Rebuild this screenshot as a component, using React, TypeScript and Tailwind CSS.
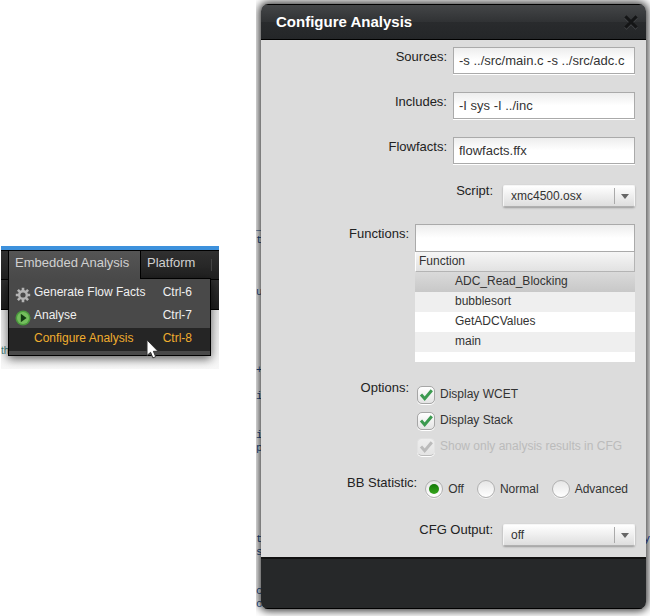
import React, { useState } from "react";

const functions = ["ADC_Read_Blocking", "bubblesort", "GetADCValues", "main"];

const codeLines: Record<number, string> = {
  17: "_",
  18: "t",
  22: "u",
  28: "+",
  30: "i",
  33: "i",
  34: "p",
  41: "t",
  42: "s",
  45: "c",
  46: "o",
};

function GearIcon() {
  return (
    <svg viewBox="0 0 16 16" className="h-4 w-4 shrink-0" aria-hidden="true">
      <g stroke="#b4b4b4" strokeWidth="2.6">
        <path d="M8 .8v14.4M.8 8h14.4M2.9 2.9l10.2 10.2M13.1 2.9L2.9 13.1" />
      </g>
      <circle cx="8" cy="8" r="5" fill="#b4b4b4" />
      <circle cx="8" cy="8" r="2.6" fill="#4a4a4a" />
    </svg>
  );
}

function PlayIcon() {
  return (
    <svg viewBox="0 0 16 16" className="h-4 w-4 shrink-0" aria-hidden="true">
      <circle cx="8" cy="8" r="7.5" fill="#4b9a3d" />
      <circle cx="8" cy="8" r="6" fill="#74be5d" />
      <path d="M5.8 3.8v8.4L11.6 8z" fill="#123a12" />
    </svg>
  );
}

function MenuItem({ icon, label, keys, active }: { icon?: React.ReactNode; label: string; keys: string; active?: boolean }) {
  return (
    <button
      type="button"
      role="menuitem"
      className={
        active
          ? "flex h-[23px] w-full items-center bg-[#252525] pr-[18px] pb-1 pl-1.5 text-xs text-[#f0ad2e]"
          : "flex h-[23px] w-full items-center pr-[18px] pb-1 pl-1.5 text-xs text-[#f0f0f0]"
      }
    >
      <span className="flex h-[22px] w-[19px] items-end">{icon}</span>
      <span className="flex-1 text-left whitespace-nowrap">{label}</span>
      <span>{keys}</span>
    </button>
  );
}

function MenuPanel() {
  return (
    <section className="relative mt-[246px] ml-px w-[218px] shrink-0 overflow-hidden">
      <div className="h-1 bg-[#3d91dc]" />
      <nav className="flex h-[29px] items-stretch border-t border-black bg-linear-to-b from-[#303030] to-[#202020] pl-[7px] text-[13px] text-[#d0d0d0]">
        <button type="button" className="relative z-20 w-[133px] border-x border-black bg-linear-to-b from-[#555] to-[#494949] pb-1 pl-1.5 text-left whitespace-nowrap">
          Embedded Analysis
        </button>
        <button type="button" className="px-1.5 pb-1">
          Platform
        </button>
        <span className="my-2 ml-2.5 w-px bg-[#444]" />
      </nav>
      <div className="h-[31px] border-y border-black bg-linear-to-b from-[#303030] to-[#1e1e1e]" />
      <div className="h-[59px] bg-linear-to-b from-[#e6e6e6] to-[#f8f8f8] pt-[34px] text-[10px] leading-[14px] text-[#3f8077]">
        th
      </div>
      <div role="menu" className="absolute top-8 left-[7px] z-10 w-[203px] border border-black bg-[#494949] pt-[3px] pb-1 shadow-[0_3px_9px_rgba(0,0,0,0.6)]">
        <MenuItem icon={<GearIcon />} label="Generate Flow Facts" keys="Ctrl-6" />
        <MenuItem icon={<PlayIcon />} label="Analyse" keys="Ctrl-7" />
        <MenuItem label="Configure Analysis" keys="Ctrl-8" active />
      </div>
      <svg viewBox="0 0 13 20" className="absolute top-[93px] left-[145px] z-30 h-5 w-[13px]" aria-hidden="true">
        <path d="M1 1v15.5l3.6-3.2 2.3 5.6 2.8-1.2-2.3-5.4H12z" fill="#fff" stroke="#333" strokeWidth="1" />
      </svg>
    </section>
  );
}

function TextRow({ id, label, value }: { id: string; label: string; value: string }) {
  return (
    <div className="flex items-start justify-end gap-1.5">
      <label htmlFor={id} className="leading-5">
        {label}
      </label>
      <div className="w-[182px] border-b border-white">
        <input
          id={id}
          defaultValue={value}
          className="block h-[27px] w-full border border-[#aaa] bg-linear-to-b from-[#ededed] to-white to-50% px-[5px] text-[13px] text-[#333] outline-none"
        />
      </div>
    </div>
  );
}

function SelectRow({ id, label, value }: { id: string; label: string; value: string }) {
  return (
    <div className="flex items-start justify-end gap-2.5">
      <label htmlFor={id} className="leading-5">
        {label}
      </label>
      <div className="relative mt-1 w-[132px]">
        <select
          id={id}
          defaultValue={value}
          className="block h-[22px] w-full appearance-none rounded-xs border border-[#f6f6f6] border-b-[#b0b0b0] bg-linear-to-b from-white to-[#dedede] pl-[7px] text-xs text-[#333] shadow-[0_1px_2px_rgba(0,0,0,0.3)] outline-none"
        >
          <option>{value}</option>
        </select>
        <span className="pointer-events-none absolute inset-y-0 right-0 flex w-[21px] items-center">
          <span className="h-4 w-px bg-[#aaa]" />
          <svg viewBox="0 0 8 5" className="ml-1.5 h-[5px] w-2" aria-hidden="true">
            <path d="M0 0h8L4 5z" fill="#666" />
          </svg>
        </span>
      </div>
    </div>
  );
}

function CheckOption({ label, disabled }: { label: string; disabled?: boolean }) {
  return (
    <label className={disabled ? "flex h-[18px] items-center gap-[5px] text-[#bbb]" : "flex h-[18px] items-center gap-[5px]"}>
      <span className="grid h-[18px] w-[18px] shrink-0">
        <input
          type="checkbox"
          defaultChecked
          disabled={disabled}
          className="peer col-start-1 row-start-1 h-[18px] w-[18px] appearance-none rounded-[5px] border border-[#a6a6a6] bg-linear-to-b from-white to-[#e4e4e4] shadow-[0_1px_0_#fff] disabled:border-[#e2e2e2] disabled:border-b-[#bbb] disabled:from-[#eee]"
        />
        <svg viewBox="0 0 18 18" className="pointer-events-none invisible col-start-1 row-start-1 h-[18px] w-[18px] peer-checked:visible" aria-hidden="true">
          <path d="M4 8.6l3.7 4.2L14.8 4.3" fill="none" stroke={disabled ? "#bbb" : "#3c9a50"} strokeWidth="3" />
        </svg>
      </span>
      <span className="pb-0.5">{label}</span>
    </label>
  );
}

function RadioOption({ label, checked }: { label: string; checked?: boolean }) {
  return (
    <label className="flex h-[18px] items-center gap-[5px]">
      <input
        type="radio"
        name="bb-statistic"
        defaultChecked={checked}
        className="grid h-[18px] w-[18px] shrink-0 appearance-none place-items-center rounded-full border border-[#b0b0b0] bg-linear-to-b from-[#e6e6e6] to-white shadow-[0_1px_0_#f4f4f4] before:hidden before:h-2.5 before:w-2.5 before:rounded-full before:bg-linear-to-b before:from-[#137a08] before:to-[#35a51c] checked:before:block"
      />
      {label}
    </label>
  );
}

function Dialog() {
  const [selected, setSelected] = useState(0);
  return (
    <section
      role="dialog"
      aria-labelledby="dialog-title"
      className="relative overflow-hidden rounded-[7px] bg-[#dcdcdc] text-[13px] text-[#222] shadow-[0_0_8px_2px_rgba(0,0,0,0.8)]"
    >
      <header className="flex h-9 items-center justify-between border-y border-black bg-[linear-gradient(#444648,#303234_50%,#292b2d_50%,#242628)] pr-[7px] pl-[15px]">
        <h1 id="dialog-title" className="text-[15px] font-bold text-white">
          Configure Analysis
        </h1>
        <button type="button" aria-label="Close">
          <svg viewBox="0 0 16 16" className="h-4 w-4">
            <path d="M2.4 3.4l11.2 11.2M13.6 3.4L2.4 14.6" stroke="#45474a" strokeWidth="3" />
            <path d="M2.4 2.4l11.2 11.2M13.6 2.4L2.4 13.6" stroke="#141516" strokeWidth="3" />
          </svg>
        </button>
      </header>
      <form className="flex flex-col pt-[7px] pr-[11px] pb-[11px]">
        <div className="flex flex-col gap-[17px]">
          <TextRow id="sources" label="Sources:" value="-s ../src/main.c -s ../src/adc.c" />
          <TextRow id="includes" label="Includes:" value="-I sys -I ../inc" />
          <TextRow id="flowfacts" label="Flowfacts:" value="flowfacts.ffx" />
        </div>
        <div className="mt-4">
          <SelectRow id="script" label="Script:" value="xmc4500.osx" />
        </div>
        <div className="mt-[17px] flex items-start justify-end gap-1.5">
          <label htmlFor="functions" className="leading-5">
            Functions:
          </label>
          <div className="w-[220px] bg-white pb-2.5">
            <input
              id="functions"
              className="block h-7 w-full border border-[#aaa] bg-linear-to-b from-[#ededed] to-white to-50% px-[5px] text-[13px] outline-none"
            />
            <table className="w-full border-separate border-spacing-0 text-left text-xs leading-4 text-[#333]">
              <thead>
                <tr className="h-5">
                  <th className="border-r border-b border-l border-[#b4b4b4] border-l-white bg-linear-to-b from-[#f6f6f6] to-[#e2e2e2] py-0 pr-1 pb-0.5 pl-[3px] font-normal">
                    Function
                  </th>
                </tr>
              </thead>
              <tbody>
                {functions.map((name, i) => (
                  <tr
                    key={name}
                    onClick={() => setSelected(i)}
                    className={
                      i === selected
                        ? "h-5 bg-linear-to-b from-[#dadada] to-[#c8c8c8]"
                        : i % 2
                          ? "h-5 bg-[#efefef]"
                          : "h-5 bg-white"
                    }
                  >
                    <td className="py-0 pb-[3px] pl-10">{name}</td>
                  </tr>
                ))}
              </tbody>
            </table>
          </div>
        </div>
        <fieldset className="mt-4 flex items-start justify-end gap-1.5" aria-labelledby="options-label">
          <span id="options-label" className="leading-5">
            Options:
          </span>
          <div className="flex w-[220px] flex-col gap-2 pt-2 pl-0.5 text-xs text-[#333]">
            <CheckOption label="Display WCET" />
            <CheckOption label="Display Stack" />
            <CheckOption label="Show only analysis results in CFG" disabled />
          </div>
        </fieldset>
        <fieldset className="mt-[17px] flex items-start justify-end gap-2" aria-labelledby="bb-label">
          <span id="bb-label" className="leading-5">
            BB Statistic:
          </span>
          <div className="flex gap-[13px] pt-[7px] pr-[7px] text-xs text-[#333]">
            <RadioOption label="Off" checked />
            <RadioOption label="Normal" />
            <RadioOption label="Advanced" />
          </div>
        </fieldset>
        <div className="mt-[22px]">
          <SelectRow id="cfg-output" label="CFG Output:" value="off" />
        </div>
      </form>
      <footer className="h-[52px] border-t-2 border-b border-t-[#111] border-b-black bg-[#262829]" />
    </section>
  );
}

export default function App() {
  return (
    <main className="flex items-start bg-white font-['Liberation_Sans',Arial,sans-serif]">
      <MenuPanel />
      <div className="relative ml-[37px] min-w-0 flex-1 overflow-hidden pt-1 pr-1 pb-[7px] pl-[5px]">
        <pre className="absolute top-0 left-0 font-['Liberation_Mono',monospace] text-[11px] leading-[13px] text-[#23508a]">
          {Array.from({ length: 47 }, (_, i) => codeLines[i] ?? " ").join("\n")}
        </pre>
        <pre className="absolute top-[533px] right-0 font-['Liberation_Mono',monospace] text-[11px] leading-[13px] text-[#2340b0]">y</pre>
        <Dialog />
      </div>
    </main>
  );
}
